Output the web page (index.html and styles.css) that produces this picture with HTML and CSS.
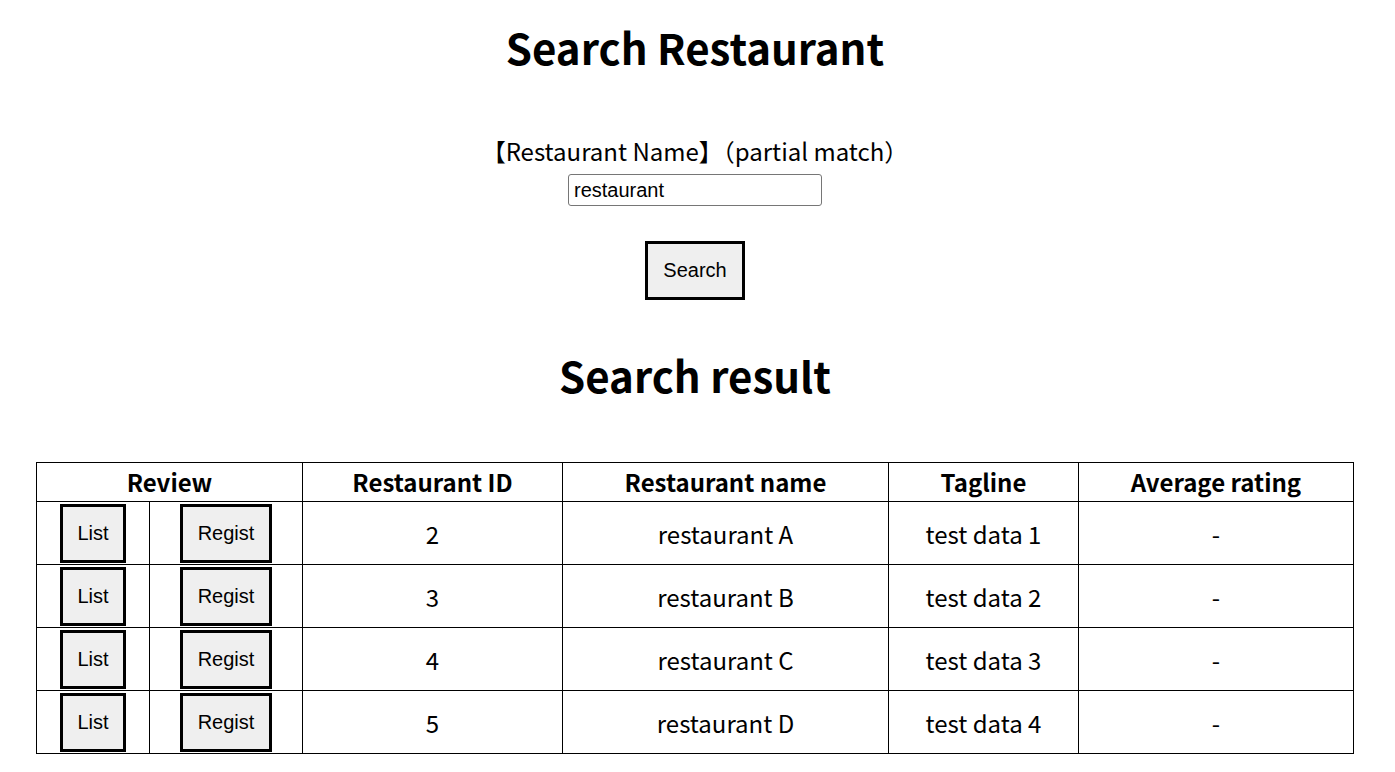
FILE: index.html
```html
<!DOCTYPE html>
<html>
<head>
<meta charset="utf-8">
<link rel="stylesheet" href="styles.css">
</head>
<body>
<div class="page">
  <h1 class="title">Search Restaurant</h1>
  <form class="search">
    <div class="label">【Restaurant Name】（partial match）</div>
    <input class="field" type="text" value="restaurant">
    <div class="actions"><button type="button" class="btn btn-search">Search</button></div>
  </form>
  <h1 class="title result-title">Search result</h1>
  <table class="results">
    <colgroup>
      <col class="c-list"><col class="c-regist"><col class="c-id"><col class="c-name"><col class="c-tag"><col class="c-avg">
    </colgroup>
    <thead>
      <tr><th colspan="2">Review</th><th>Restaurant ID</th><th>Restaurant name</th><th>Tagline</th><th>Average rating</th></tr>
    </thead>
    <tbody>
      <tr><td><button class="btn">List</button></td><td><button class="btn">Regist</button></td><td>2</td><td>restaurant A</td><td>test data 1</td><td>-</td></tr>
      <tr><td><button class="btn">List</button></td><td><button class="btn">Regist</button></td><td>3</td><td>restaurant B</td><td>test data 2</td><td>-</td></tr>
      <tr><td><button class="btn">List</button></td><td><button class="btn">Regist</button></td><td>4</td><td>restaurant C</td><td>test data 3</td><td>-</td></tr>
      <tr><td><button class="btn">List</button></td><td><button class="btn">Regist</button></td><td>5</td><td>restaurant D</td><td>test data 4</td><td>-</td></tr>
    </tbody>
  </table>
</div>
</body>
</html>
```
FILE: styles.css
```css
body {
  margin: 8px;
  background: #fff;
  color: #000;
  font-family: "Noto Sans CJK JP", "Noto Sans", sans-serif;
}
.page {
  width: 1374px;
  text-align: center;
}
.title {
  font-size: 42px;
  font-weight: bold;
  margin: 9px 0 0;
  line-height: 59px;
}
.search {
  display: flex;
  flex-direction: column;
  align-items: center;
  margin-top: 58px;
}
.label {
  font-size: 24px;
  line-height: 34px;
  margin-bottom: 6px;
}
.field {
  box-sizing: border-box;
  width: 254px;
  height: 32px;
  padding: 1px 5px;
  font-family: "Liberation Sans", Arial, sans-serif;
  font-size: 20px;
  border: 1px solid #767676;
  border-radius: 3px;
}
.actions {
  margin-top: 35px;
}
.btn {
  font-family: "Liberation Sans", Arial, sans-serif;
  font-size: 20px;
  line-height: 23px;
  padding: 15px 14.5px;
  border: 3px solid #000;
  background: #efefef;
  color: #000;
}
.btn-search {
  padding: 15px 15px;
}
.result-title {
  margin: 45px 0 58px;
}
.results {
  width: 1317px;
  margin: 0 auto;
  border-collapse: collapse;
  table-layout: fixed;
  font-size: 24px;
}
.results th, .results td {
  border: 1px solid #000;
  padding: 1px;
  text-align: center;
}
.results th {
  font-weight: bold;
  height: 38px;
  padding: 0;
  line-height: 34px;
}
.results td {
  height: 60px;
}
.c-list { width: 113px; }
.c-regist { width: 153px; }
.c-id { width: 260px; }
.c-name { width: 326px; }
.c-tag { width: 190px; }
.c-avg { width: 275px; }
```
